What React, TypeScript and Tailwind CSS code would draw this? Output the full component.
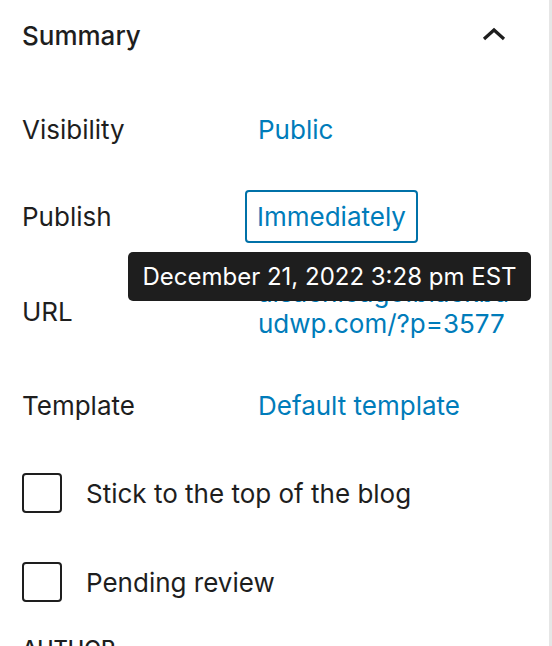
import React from "react";

const font = { fontFamily: "Inter, 'Noto Sans', sans-serif" };

function Row({ label, children, h, mt }: { label: string; children: React.ReactNode; h: string; mt: string }) {
  return (
    <div className={`flex items-center shrink-0 ${h} ${mt}`}>
      <div className="w-[236px] shrink-0 text-[26px] text-[#1e1e1e]">{label}</div>
      <div className="flex-1">{children}</div>
    </div>
  );
}

function Checkbox({ label }: { label: string }) {
  return (
    <div className="flex items-center h-[40px]">
      <div className="w-[40px] h-[40px] border-2 border-[#1e1e1e] rounded-[4px] shrink-0" />
      <div className="ml-[24px] text-[26px] text-[#1e1e1e]">{label}</div>
    </div>
  );
}

export default function App() {
  return (
    <div className="w-[552px] h-[646px] overflow-hidden bg-white relative flex" style={font}>
      <div className="flex-1 pl-[22px] pr-[24px] flex flex-col">
        <div className="h-[71px] shrink-0 flex items-center justify-between">
          <div className="text-[26px] font-medium text-[#1e1e1e]">Summary</div>
          <svg width="24" height="14" viewBox="0 0 24 14" className="mr-[19px] mb-[4px]">
            <path d="M2 12 L12 3 L22 12" fill="none" stroke="#1e1e1e" strokeWidth="3.2" />
          </svg>
        </div>
        <Row label="Visibility" h="h-[52px]" mt="mt-[32px]">
          <div className="text-[26px] text-[#007cba]">Public</div>
        </Row>
        <Row label="Publish" h="h-[53px]" mt="mt-[35px]">
          <div className="-ml-[13px] inline-flex items-center h-[53px] px-[10px] border-2 border-[#0071a8] rounded-[4px] text-[26px] text-[#007cba]">
            Immediately
          </div>
        </Row>
        <div className="flex items-start shrink-0 h-[62px] mt-[34px]">
          <div className="w-[236px] shrink-0 mt-[15px] text-[26px] text-[#1e1e1e]">URL</div>
          <div className="flex-1 text-[26px] leading-[31px] text-[#007cba] break-all">
            alsachicago.blackba<br />udwp.com/?p=3577
          </div>
        </div>
        <Row label="Template" h="h-[52px]" mt="mt-[40px]">
          <div className="text-[26px] text-[#007cba]">Default template</div>
        </Row>
        <div className="mt-[42px] shrink-0">
          <Checkbox label="Stick to the top of the blog" />
        </div>
        <div className="mt-[49px] shrink-0">
          <Checkbox label="Pending review" />
        </div>
        <div className="mt-[30px] shrink-0 text-[22px] font-medium text-[#1e1e1e] uppercase">Author</div>
      </div>
      <div className="w-[3px] bg-[#e6e6e6] shrink-0" />
      <div className="absolute left-[128px] top-[252px] w-[403px] h-[49px] bg-[#1e1e1e] rounded-[5px] flex items-center justify-center text-white text-[24px]">
        December 21, 2022 3:28 pm EST
      </div>
    </div>
  );
}
